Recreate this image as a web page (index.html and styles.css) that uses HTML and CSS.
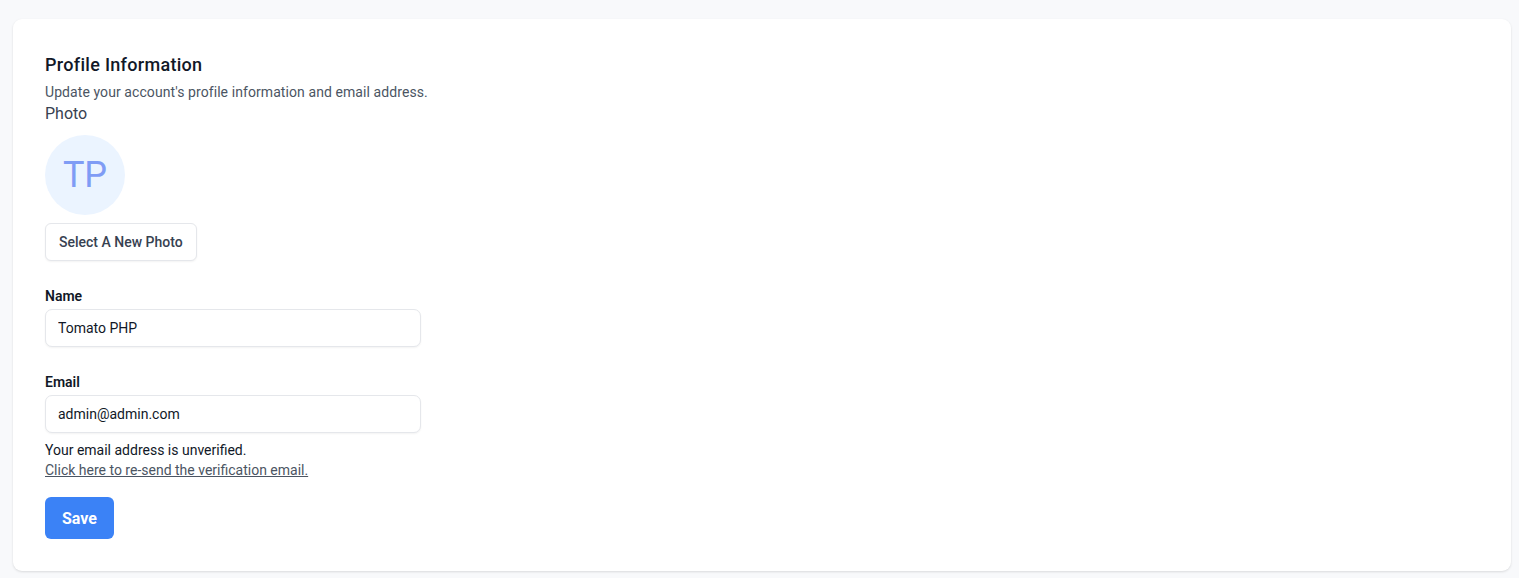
FILE: index.html
```html
<!DOCTYPE html>
<html lang="en">
<head>
<meta charset="utf-8">
<title>Profile Information</title>
<link rel="stylesheet" href="styles.css">
</head>
<body>
<main class="page">
  <section class="card">
    <h2 class="title">Profile Information</h2>
    <p class="subtitle">Update your account's profile information and email address.</p>
    <div class="photo-label">Photo</div>
    <div class="avatar">TP</div>
    <button class="btn-secondary" type="button">Select A New Photo</button>

    <label class="field-label field-first" for="name">Name</label>
    <input class="input" id="name" type="text" value="Tomato PHP">

    <label class="field-label" for="email">Email</label>
    <input class="input" id="email" type="email" value="admin@admin.com">

    <p class="unverified">Your email address is unverified.</p>
    <a class="resend" href="#">Click here to re-send the verification email.</a>

    <div class="actions">
      <button class="btn-primary" type="submit">Save</button>
    </div>
  </section>
</main>
</body>
</html>
```
FILE: styles.css
```css
* { box-sizing: border-box; }
html, body {
  margin: 0;
  padding: 0;
  background: #f8f9fb;
  font-family: Roboto, "Noto Sans", "Liberation Sans", sans-serif;
  color: #111827;
}
.page {
  padding: 19px 8px 7px 13px;
}
.card {
  background: #ffffff;
  border-radius: 9px;
  box-shadow: 0 1px 3px rgba(0,0,0,0.08), 0 1px 2px rgba(0,0,0,0.05);
  padding: 32px 32px 32px;
  display: flex;
  flex-direction: column;
  align-items: flex-start;
}
.title {
  margin: 0;
  font-size: 18px;
  line-height: 28px;
  font-weight: 500;
  letter-spacing: 0.3px;
  color: #111827;
}
.subtitle {
  margin: 3px 0 0;
  font-size: 14px;
  line-height: 20px;
  letter-spacing: 0.08px;
  color: #4b5563;
}
.photo-label {
  font-size: 16px;
  line-height: 24px;
  color: #374151;
}
.avatar {
  margin-top: 9px;
  width: 80px;
  height: 80px;
  border-radius: 50%;
  background: #ebf4ff;
  color: #7f9cf5;
  font-size: 36px;
  display: flex;
  align-items: center;
  justify-content: center;
}
.btn-secondary {
  margin-top: 8px;
  height: 38px;
  padding: 0 13px;
  background: #fff;
  border: 1px solid #e5e7eb;
  border-radius: 6px;
  box-shadow: 0 1px 2px rgba(0,0,0,0.05);
  font-family: inherit;
  font-size: 14px;
  font-weight: 500;
  color: #374151;
}
.field-label {
  margin-top: 25px;
  font-size: 14px;
  line-height: 20px;
  font-weight: 600;
  color: #111827;
}
.input {
  margin-top: 3px;
  width: 376px;
  height: 38px;
  padding: 0 12px;
  border: 1px solid #e5e7eb;
  border-radius: 7px;
  box-shadow: 0 1px 2px rgba(0,0,0,0.05);
  font-family: inherit;
  font-size: 14px;
  color: #111827;
  background: #fff;
}
.unverified {
  margin: 7px 0 0;
  font-size: 14px;
  line-height: 20px;
  color: #111827;
}
.resend {
  font-size: 14px;
  line-height: 20px;
  color: #4b5563;
  text-decoration: underline;
}
.actions {
  margin-top: 17px;
}
.btn-primary {
  height: 42px;
  padding: 0 17px;
  background: #3b82f6;
  border: none;
  border-radius: 6px;
  font-family: inherit;
  font-size: 16px;
  font-weight: 700;
  color: #fff;
}
```
